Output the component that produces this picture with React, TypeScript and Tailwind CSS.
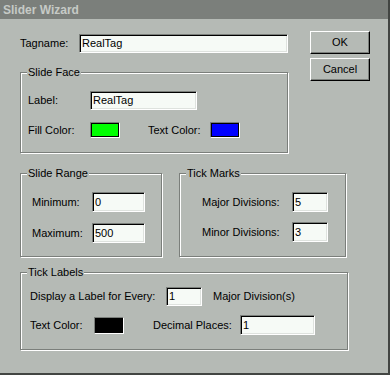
import type { ReactNode } from "react";

const BG = "bg-[#b5bab5]";

function Field({ value, className = "" }: { value: string; className?: string }) {
  return (
    <div
      className={`flex items-center border border-[#7b7f7b] border-r-white border-b-white bg-[#f6faf6] pl-[2px] shadow-[inset_1px_1px_0_#000,inset_-1px_-1px_0_#dee2de] ${className}`}
    >
      <span className="leading-none">{value}</span>
    </div>
  );
}

function Swatch({ color, className = "" }: { color: string; className?: string }) {
  return (
    <div
      className={`border border-[#7b7f7b] border-r-white border-b-white p-0 ${className}`}
    >
      <div className={`h-full w-full border border-black ${color}`} />
    </div>
  );
}

function Group({
  title,
  className = "",
  children,
}: {
  title: string;
  className?: string;
  children: ReactNode;
}) {
  return (
    <div
      className={`relative border border-[#7b7f7b] shadow-[inset_1px_1px_0_#fff,1px_1px_0_#fff] ${className}`}
    >
      <span className={`absolute -top-[8px] left-[6px] px-[1px] leading-[14px] ${BG}`}>
        {title}
      </span>
      {children}
    </div>
  );
}

function Btn({ children }: { children: ReactNode }) {
  return (
    <button
      className="flex h-[23px] w-[60px] items-center justify-center border border-white border-r-black border-b-black shadow-[inset_-1px_-1px_0_#7b7f7b]"
      type="button"
    >
      {children}
    </button>
  );
}

export default function App() {
  return (
    <div
      className={`h-[375px] w-[390px] overflow-hidden border-r-2 border-b-2 border-[#424542] ${BG} text-[11px] text-black`}
      style={{ fontFamily: '"Liberation Sans", Arial, sans-serif' }}
    >
      <div className="flex h-[19px] items-center bg-[#7b7f7b] pl-[3px] text-[12px] font-bold text-[#c6cac6]">
        Slider Wizard
      </div>

      <div className="pt-[12px] pl-[20px]">
        <div className="flex items-start">
          <div className="w-[268px]">
            <div className="mt-[3px] flex h-[19px] items-center">
              <span className="w-[59px]">Tagname:</span>
              <Field className="h-[19px] w-[209px]" value="RealTag" />
            </div>

            <Group className="mt-[19px] h-[81px]" title="Slide Face">
              <div className="pt-[18px] pl-[7px]">
                <div className="flex h-[19px] items-center">
                  <span className="w-[62px]">Label:</span>
                  <Field className="h-[19px] w-[107px]" value="RealTag" />
                </div>
                <div className="mt-[12px] flex h-[16px] items-center">
                  <span className="w-[62px]">Fill Color:</span>
                  <Swatch className="h-[16px] w-[30px]" color="bg-[#00ff00]" />
                  <span className="ml-[28px] w-[62px]">Text Color:</span>
                  <Swatch className="h-[16px] w-[30px]" color="bg-[#0000ff]" />
                </div>
              </div>
            </Group>
          </div>

          <div className="ml-[22px] flex flex-col gap-[4px]">
            <Btn>OK</Btn>
            <Btn>Cancel</Btn>
          </div>
        </div>

        <div className="mt-[20px] flex gap-[17px]">
          <Group className="h-[84px] w-[142px]" title="Slide Range">
            <div className="pt-[18px] pl-[11px]">
              <div className="flex h-[20px] items-center">
                <span className="w-[60px]">Minimum:</span>
                <Field className="h-[20px] w-[53px]" value="0" />
              </div>
              <div className="mt-[11px] flex h-[20px] items-center">
                <span className="w-[60px]">Maximum:</span>
                <Field className="h-[20px] w-[53px]" value="500" />
              </div>
            </div>
          </Group>

          <Group className="h-[84px] w-[167px]" title="Tick Marks">
            <div className="pt-[18px] pl-[22px]">
              <div className="flex h-[20px] items-center">
                <span className="w-[90px]">Major Divisions:</span>
                <Field className="h-[20px] w-[36px]" value="5" />
              </div>
              <div className="mt-[10px] flex h-[20px] items-center">
                <span className="w-[90px]">Minor Divisions:</span>
                <Field className="h-[20px] w-[36px]" value="3" />
              </div>
            </div>
          </Group>
        </div>

        <Group className="mt-[15px] h-[78px] w-[328px]" title="Tick Labels">
          <div className="pt-[14px] pl-[9px]">
            <div className="flex h-[19px] items-center">
              <span className="w-[136px]">Display a Label for Every:</span>
              <Field className="h-[19px] w-[36px]" value="1" />
              <span className="ml-[11px]">Major Division(s)</span>
            </div>
            <div className="mt-[9px] flex h-[20px] items-center">
              <span className="w-[64px]">Text Color:</span>
              <Swatch className="h-[17px] w-[30px]" color="bg-black" />
              <span className="ml-[29px] w-[87px]">Decimal Places:</span>
              <Field className="h-[20px] w-[75px]" value="1" />
            </div>
          </div>
        </Group>
      </div>
    </div>
  );
}
